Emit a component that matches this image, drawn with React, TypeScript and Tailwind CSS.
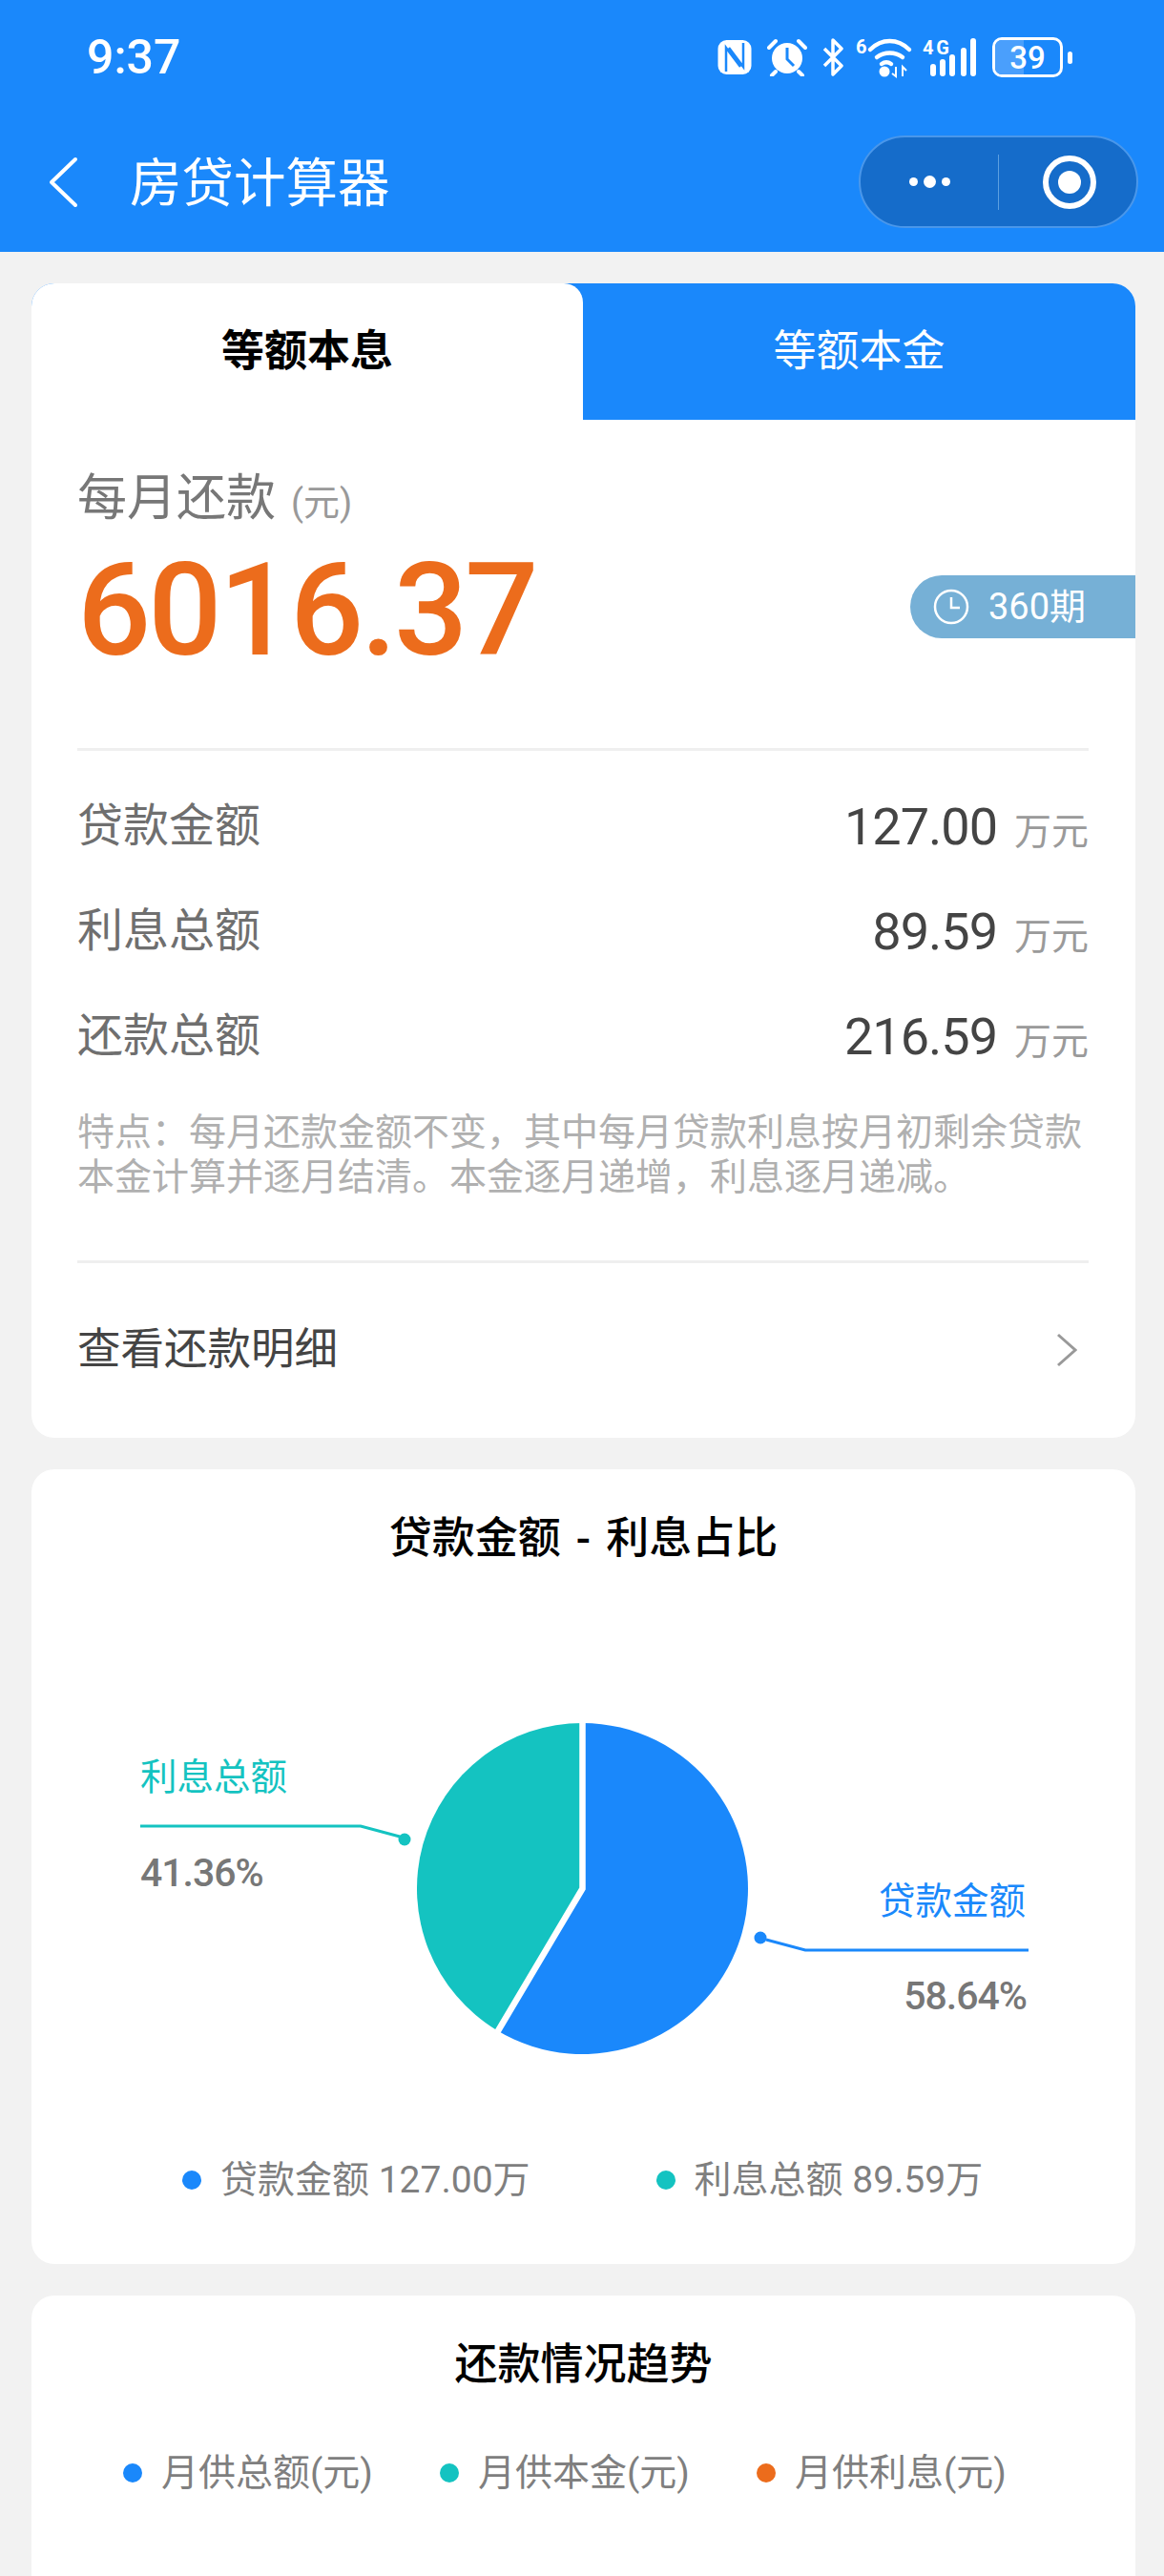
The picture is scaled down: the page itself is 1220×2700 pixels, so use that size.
const FONT = 'font-["Roboto","Noto_Sans_CJK_SC",sans-serif]';

const StatusIcons = () => (
	<div className="flex items-center">
		{/* NFC */}
		<svg width="36" height="38" viewBox="0 0 36 38">
			<rect x="0.5" y="1" width="35" height="36" rx="9" fill="#fff" />
			<path d="M9 34V9l15 20M27 4v25L12 9" fill="none" stroke="#1a88fb" strokeWidth="2.5" />
		</svg>
		{/* alarm */}
		<svg width="42" height="40" viewBox="0 0 42 40" className="ml-[16px]">
			<circle cx="21" cy="21" r="16" fill="#fff" />
			<path d="M21 10v12l7 7" fill="none" stroke="#1a88fb" strokeWidth="3" />
			<path d="M2 10 9 3M40 10l-7-7M9 35l-4 4M33 35l4 4" stroke="#fff" strokeWidth="4" strokeLinecap="round" />
		</svg>
		{/* bluetooth */}
		<svg width="24" height="40" viewBox="0 0 24 40" className="ml-[15px]">
			<path d="M3 11l18 18-9 9V2l9 9L3 29" fill="none" stroke="#fff" strokeWidth="3.5" strokeLinejoin="round" />
		</svg>
		{/* wifi 6 */}
		<svg width="58" height="42" viewBox="0 0 58 42" className="ml-[12px] overflow-visible">
			<text x="0" y="17" fill="#fff" fontSize="20" fontWeight="700" fontFamily="Roboto">6</text>
			<path d="M15 13C27 1 44 1 56 13M22 21c8-6 19-6 27 0M27 28c3-2 7-2 10 0" fill="none" stroke="#fff" strokeWidth="4.5" strokeLinecap="round" />
			<circle cx="30" cy="36" r="5.5" fill="#fff" />
			<path d="M42 31v10l-4-3M49 41V31l4 4" fill="none" stroke="#fff" strokeWidth="2" />
		</svg>
		{/* 4G signal */}
		<svg width="58" height="42" viewBox="0 0 58 42" className="ml-[12px] overflow-visible">
			<text x="0" y="18" fill="#fff" fontSize="20" fontWeight="700" fontFamily="Roboto" textLength="28">4G</text>
			<path d="M11 31v7M21 26v12M31 21v17M43 14v24M53 4v34" stroke="#fff" strokeWidth="6" strokeLinecap="round" />
		</svg>
		{/* battery */}
		<div className="ml-[15px] relative w-[74px] h-[42px] rounded-[10px] border-[3px] border-white flex items-center justify-center">
			<div className="absolute left-0 top-0 bottom-0 w-[30px] rounded-l-[7px] bg-[#4a9ffc]" />
			<span className="relative text-white text-[33px] leading-none font-medium">39</span>
		</div>
		<div className="ml-[5px] w-[5px] h-[13px] rounded-full bg-white" />
	</div>
);

const Header = () => (
	<div className="bg-[#1a88fb] h-[264px] text-white">
		<div className="h-[120px] pl-[91px] pr-[96px] flex items-center justify-between">
			<span className="text-[50px] leading-none font-medium">9:37</span>
			<StatusIcons />
		</div>
		<div className="h-[144px] pl-[50px] pr-[27px] flex items-start">
			<svg width="32" height="54" viewBox="0 0 32 54" className="mt-[44px]">
				<path d="M29 3 4 27l25 24" fill="none" stroke="#fff" strokeWidth="4" strokeLinecap="round" strokeLinejoin="round" />
			</svg>
			<span className="ml-[54px] mt-[38px] text-[54.5px] leading-[68px]">房贷计算器</span>
			<div className="ml-auto mt-[22px] w-[293px] h-[97px] rounded-full bg-[#156cca] border-2 border-[#4a97ea] flex items-center">
				<div className="w-[144px] flex items-center justify-center gap-[6px]">
					<span className="w-[9px] h-[9px] rounded-full bg-white" />
					<span className="w-[13px] h-[13px] rounded-full bg-white" />
					<span className="w-[9px] h-[9px] rounded-full bg-white" />
				</div>
				<div className="w-px h-[58px] bg-[#5c9fe0]" />
				<div className="flex-1 flex items-center justify-center pl-[3px]">
					<div className="w-[56px] h-[56px] rounded-full border-[6px] border-white flex items-center justify-center">
						<span className="w-[24px] h-[24px] rounded-full bg-white" />
					</div>
				</div>
			</div>
		</div>
	</div>
);

const Row = ({ label, value }: { label: string; value: string }) => (
	<div className="h-[110px] flex items-center justify-between">
		<span className="text-[48px] text-[#6f6f6f]">{label}</span>
		<span className="flex items-baseline">
			<span className="text-[54px] tracking-[-1px] text-[#444]">{value}</span>
			<span className="ml-[18px] text-[39px] text-[#9a9a9a]">万元</span>
		</span>
	</div>
);

const PieChart = () => (
	<svg width="1157" height="560" viewBox="0 0 1157 560" className="block">
		{/* center: 577.5, 329.5 */}
		<path d="M577.5 329.5V156A173.5 173.5 0 1 1 488.1 478.2Z" fill="#1a88fb" />
		<path d="M577.5 329.5V156A173.5 173.5 0 0 0 488.1 478.2Z" fill="#14c3c1" />
		<path d="M577.5 152V329.5L487 482" stroke="#fff" strokeWidth="6.5" fill="none" />
		<text x="114" y="226" fill="#14c3c1" fontSize="38.5">利息总额</text>
		<path d="M114 264H345l41 11" stroke="#14c3c1" strokeWidth="3" fill="none" />
		<circle cx="391" cy="278" r="6.5" fill="#14c3c1" />
		<text x="114" y="327" fill="#777" fontSize="41" fontWeight="500" fontFamily="Roboto" letterSpacing="-1">41.36%</text>
		<text x="1042" y="356" fill="#1a88fb" fontSize="38.5" textAnchor="end">贷款金额</text>
		<path d="M1045 394H811l-41-11" stroke="#1a88fb" strokeWidth="3" fill="none" />
		<circle cx="764" cy="381" r="6.5" fill="#1a88fb" />
		<text x="1043" y="456" fill="#777" fontSize="41" fontWeight="500" fontFamily="Roboto" letterSpacing="-1" textAnchor="end">58.64%</text>
	</svg>
);

const Dot = ({ color }: { color: string }) => (
	<span className={`w-[20px] h-[20px] rounded-full ${color}`} />
);

export default function App() {
	return (
		<div className={`w-[1220px] h-[2700px] overflow-hidden bg-[#f2f2f2] ${FONT}`}>
			<Header />
			<div className="pl-[33px] pr-[30px] pt-[33px] flex flex-col gap-[33px]">
				{/* Summary */}
				<div className="bg-white rounded-[24px] overflow-hidden h-[1210px]">
					<div className="flex h-[143px] bg-[#1a88fb]">
						<div className="w-[578px] bg-white rounded-tr-[20px] flex items-center justify-center text-[45px] font-bold text-black">
							等额本息
						</div>
						<div className="flex-1 flex items-center justify-center text-[45px] text-white">
							等额本金
						</div>
					</div>
					<div className="relative pl-[48px] pr-[49px]">
						<div className="pt-[50px] flex items-baseline h-[110px]">
							<span className="text-[52px] leading-[66px] text-[#777]">每月还款</span>
							<span className="ml-[16px] text-[38px] leading-[66px] text-[#999]">(元)</span>
						</div>
						<div className="mt-[15px] text-[136px] tracking-[-3px] leading-[150px] font-medium text-[#ec6c1c]">6016.37</div>
						<div className="absolute right-0 top-[163px] w-[236px] h-[66px] rounded-l-full bg-[#76b0d6] flex items-center pl-[24px] text-white text-[38px]">
							<svg width="38" height="38" viewBox="0 0 38 38">
								<circle cx="19" cy="19" r="17" fill="none" stroke="#fff" strokeWidth="2.5" />
								<path d="M19 9v11h9" fill="none" stroke="#fff" strokeWidth="2.5" />
							</svg>
							<span className="ml-[20px]">360期</span>
						</div>
						<div className="mt-[69px] h-[3px] bg-[#efefef]" />
						<div className="pt-[24px]">
							<Row label="贷款金额" value="127.00" />
							<Row label="利息总额" value="89.59" />
							<Row label="还款总额" value="216.59" />
						</div>
						<p className="mt-[23px] text-[39px] leading-[47px] text-[#b0b0b0]">
							特点：每月还款金额不变，其中每月贷款利息按月初剩余贷款本金计算并逐月结清。本金逐月递增，利息逐月递减。
						</p>
						<div className="mt-[63px] h-[3px] bg-[#efefef]" />
						<div className="h-[182px] flex items-center justify-between">
							<span className="text-[45.5px] text-[#444]">查看还款明细</span>
							<svg width="22" height="36" viewBox="0 0 22 36" className="mr-[12px]">
								<path d="M2 2l18 16L2 34" fill="none" stroke="#999" strokeWidth="3" />
							</svg>
						</div>
					</div>
				</div>

				{/* Loan / interest share */}
				<div className="bg-white rounded-[24px] h-[833px]">
					<h2 className="pt-[43px] text-center text-[45px] leading-[60px] font-medium text-black [word-spacing:5px]">贷款金额 - 利息占比</h2>
					<div className="mt-[7px]">
						<PieChart />
					</div>
					<div className="mt-[46px] pl-[158px] flex items-center text-[39px] text-[#7f7f7f]">
						<Dot color="bg-[#1a88fb]" />
						<span className="ml-[20px]">贷款金额 127.00万</span>
						<span className="ml-[132px] flex items-center">
							<Dot color="bg-[#14c3c1]" />
							<span className="ml-[20px]">利息总额 89.59万</span>
						</span>
					</div>
				</div>

				{/* Repayment trend */}
				<div className="bg-white rounded-t-[24px] h-[320px]">
					<h2 className="pt-[43px] text-center text-[45px] leading-[60px] font-medium text-black">还款情况趋势</h2>
					<div className="mt-[54px] pl-[96px] flex items-center gap-[70px] text-[39px] text-[#7f7f7f]">
						<span className="flex items-center gap-[20px]"><Dot color="bg-[#1a88fb]" />月供总额(元)</span>
						<span className="flex items-center gap-[20px]"><Dot color="bg-[#14c3c1]" />月供本金(元)</span>
						<span className="flex items-center gap-[20px]"><Dot color="bg-[#ec6c1c]" />月供利息(元)</span>
					</div>
				</div>
			</div>
		</div>
	);
}
